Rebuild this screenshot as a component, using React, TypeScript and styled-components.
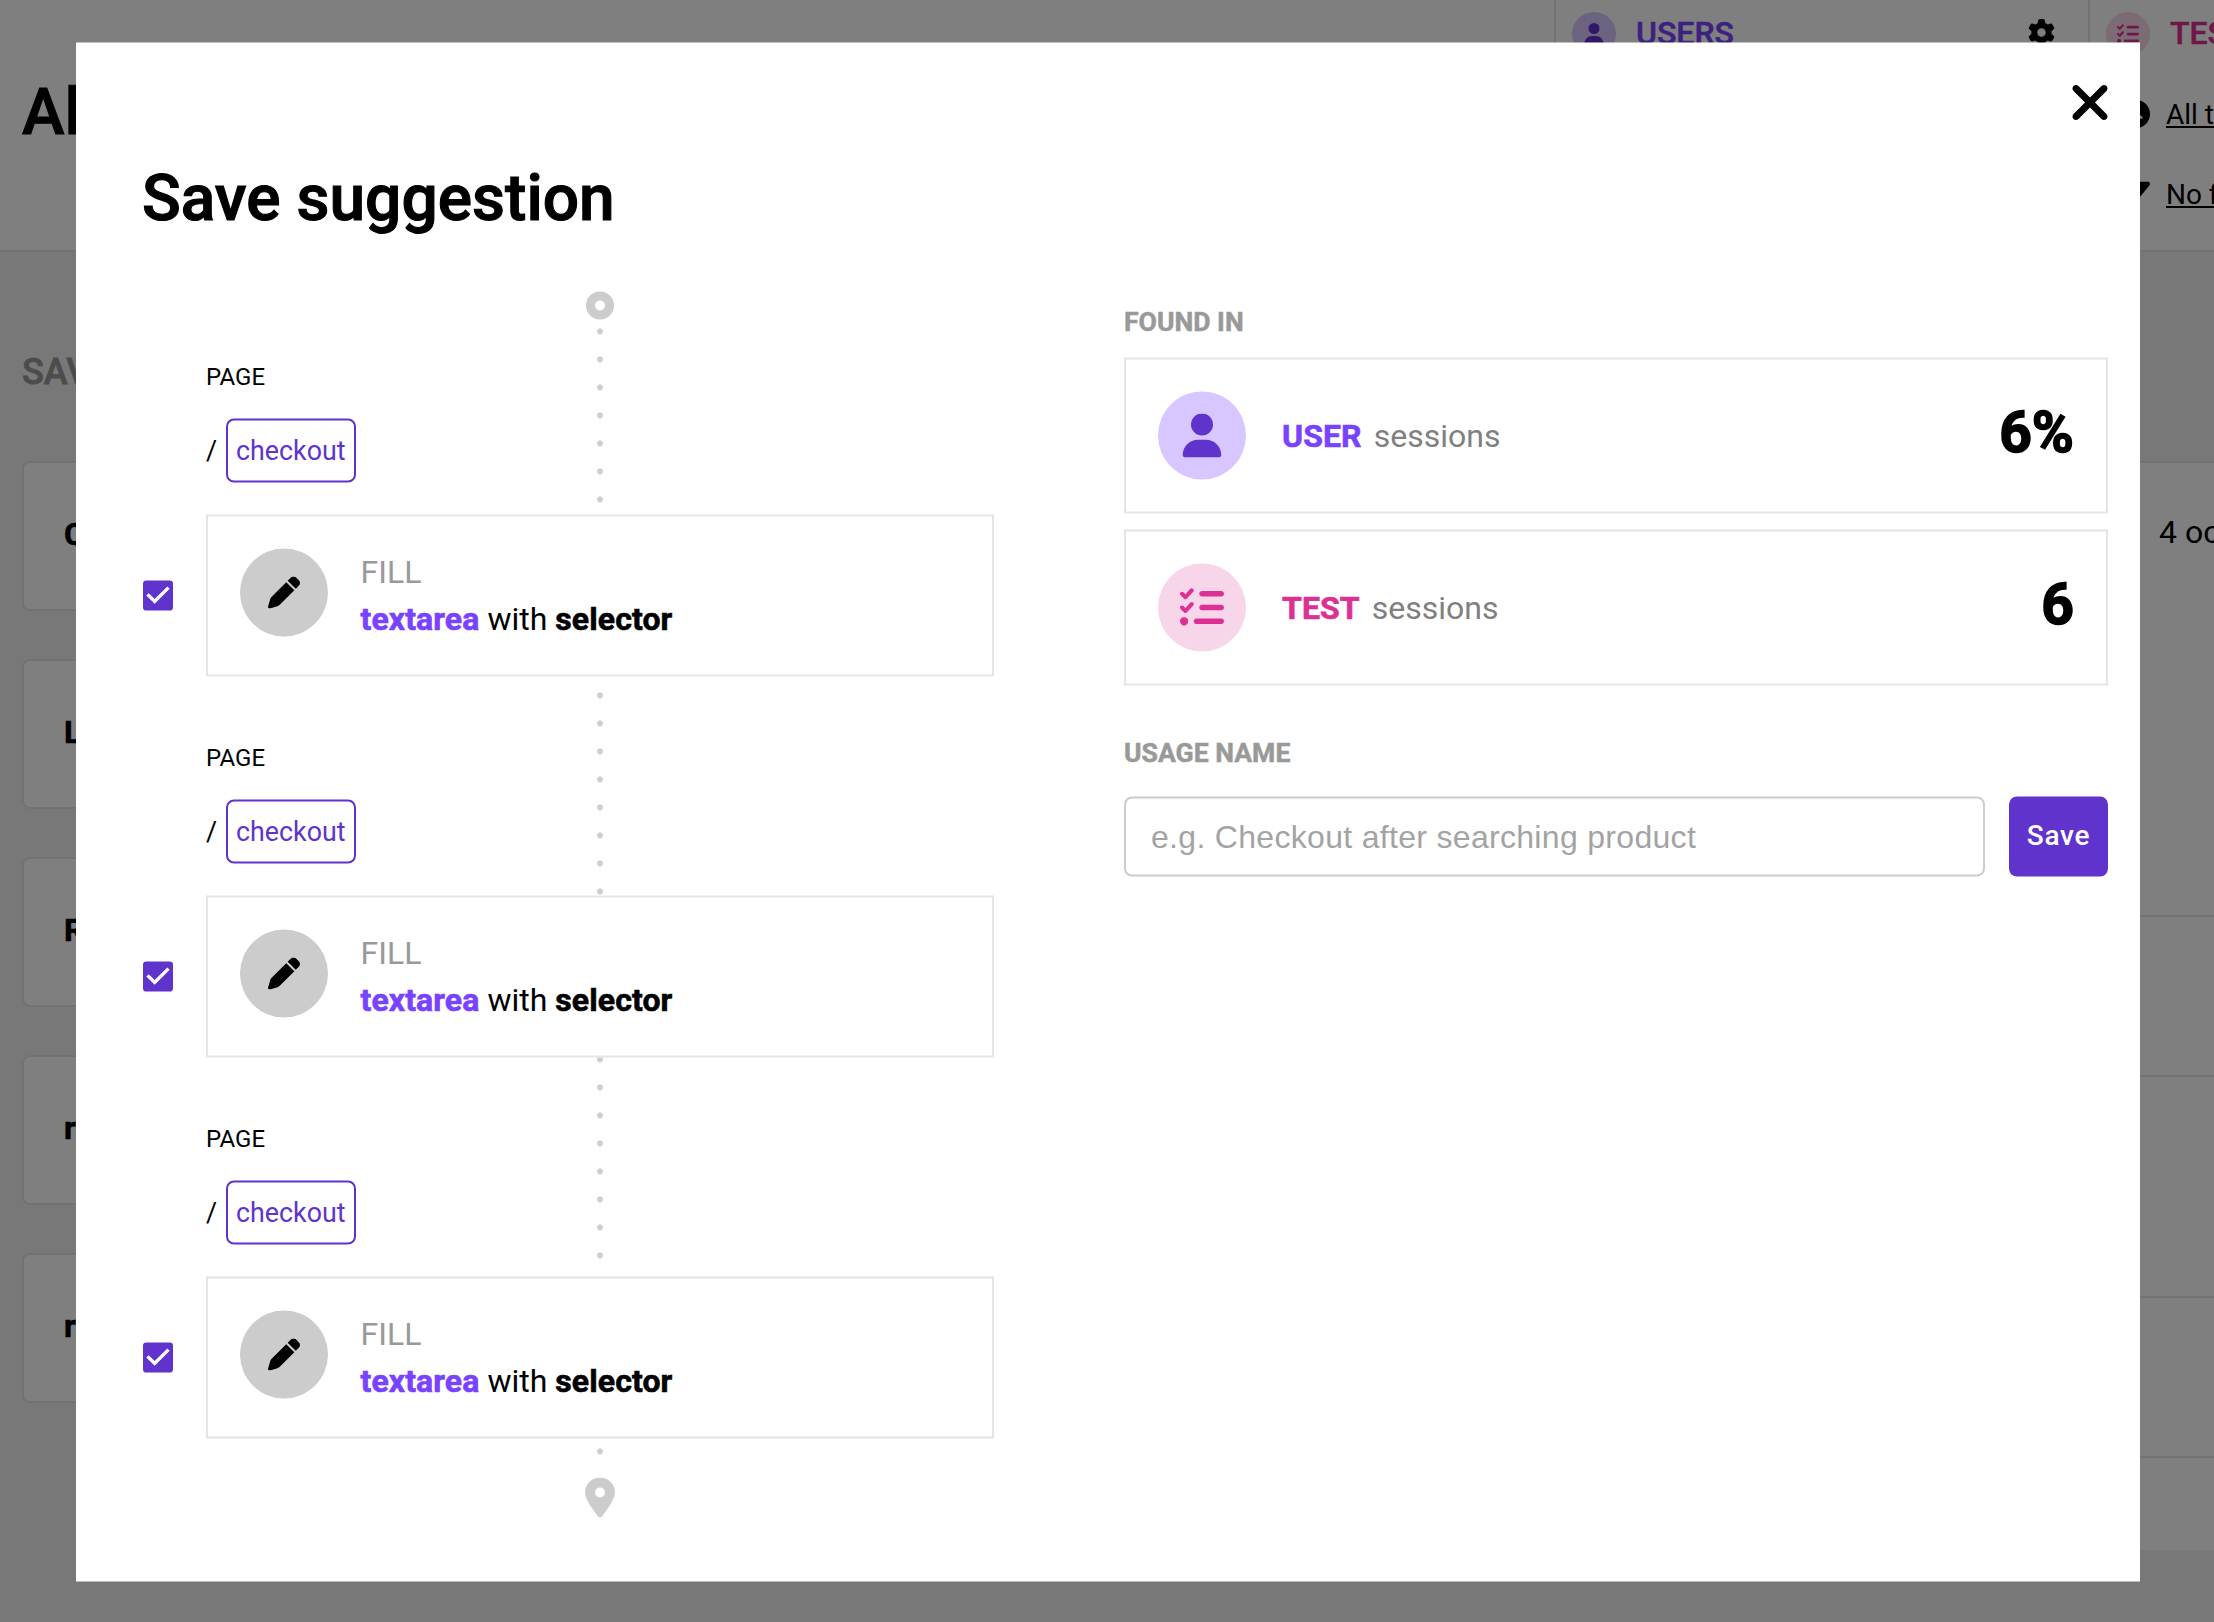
import React from "react";
import styled, { createGlobalStyle, css } from "styled-components";
import { FaClock, FaFilter, FaGear, FaListCheck, FaLocationDot, FaPen, FaUser, FaXmark } from "react-icons/fa6";
import { MdCheckBox } from "react-icons/md";

const GlobalStyle = createGlobalStyle`
  *, *::before, *::after { box-sizing: border-box; }
  html, body { margin: 0; height: 100%; overflow: hidden; }
  body { background: #f1f1f1; color: #000; font-family: Roboto, "Liberation Sans", sans-serif; font-size: 32px; }
  b { font-weight: 700; letter-spacing: 0.1px; -webkit-text-stroke: 0.6px currentColor; }
  svg { display: block; flex: none; }
`;

/* ---------- page behind the dialog ---------- */

const Page = styled.div`
  height: 1622px;
  overflow: hidden;
`;

const Header = styled.header`
  display: flex;
  height: 252px;
  background: #fff;
  border-bottom: 2px solid #e5e5e5;
  white-space: nowrap;
`;

const PageTitle = styled.h1`
  flex: 0 0 1554px;
  margin: 0;
  padding: 75px 0 0 22px;
  font-size: 64px;
  line-height: 75px;
  font-weight: 500;
  -webkit-text-stroke: 1px currentColor;
`;

const HeaderPanel = styled.section<{ $width: number }>`
  flex: 0 0 ${(p) => p.$width}px;
  padding: 12px 33px 0 16px;
  border-left: 2px solid #e5e5e5;
`;

const PanelTitle = styled.div<{ $color: string }>`
  display: flex;
  align-items: center;
  gap: 20px;
  height: 44px;
  margin-bottom: 18px;
  color: ${(p) => p.$color};
  font-weight: 500;
`;

const PanelName = styled.span`
  margin-top: -2px;
  -webkit-text-stroke: 0.5px currentColor;
`;

const PanelAction = styled.span`
  margin: -4px 0 0 auto;
  color: #000;
  font-size: 27px;
`;

const PanelLink = styled.div`
  display: flex;
  align-items: center;
  gap: 16px;
  height: 80px;
  padding-left: 16px;
  font-size: 28px;

  a {
    text-decoration: underline;
    text-decoration-thickness: 2px;
    text-underline-offset: 2px;
  }
`;

const Main = styled.main`
  padding: 99px 0 0 22px;
`;

const SectionTitle = styled.h2`
  margin: 0 0 68px;
  color: #999;
  font-size: 36px;
  line-height: 42px;
  font-weight: 500;
  -webkit-text-stroke: 0.8px currentColor;
`;

const Columns = styled.div`
  display: flex;
  align-items: flex-start;
  gap: 48px;
`;

const SavedList = styled.div`
  display: flex;
  flex-direction: column;
  gap: 48px;
  flex: 0 0 900px;
`;

const SavedCard = styled.div`
  display: flex;
  align-items: center;
  height: 150px;
  padding: 0 0 4px 40px;
  background: #fff;
  border: 2px solid #e5e5e5;
  border-radius: 8px;
`;

const Results = styled.div`
  flex: 0 0 1400px;
  border-top: 2px solid #e5e5e5;
  background: #fff;
`;

const ResultRow = styled.div<{ $height: number; $last?: boolean }>`
  height: ${(p) => p.$height}px;
  padding: 50px 0 0 1189px;
  line-height: 38px;
  white-space: nowrap;
  ${(p) => !p.$last && css`border-bottom: 2px solid #e5e5e5;`}
`;

/* ---------- dialog ---------- */

const Overlay = styled.div`
  position: fixed;
  inset: 0;
  padding: 42px 74px 0 76px;
  background: rgba(0, 0, 0, 0.5);
`;

const Dialog = styled.div`
  width: 2064px;
  height: 1539px;
  padding: 32px 32px 0 67px;
  background: #fff;
  transform: translateY(0.5px);
`;

const CloseRow = styled.div`
  display: flex;
  justify-content: flex-end;
  height: 56px;
  margin-right: -10px;
  font-size: 56px;
`;

const DialogTitle = styled.h2`
  margin: 30px 0 46px -1px;
  font-size: 64px;
  line-height: 75px;
  font-weight: 500;
  letter-spacing: 0.04px;
  -webkit-text-stroke: 1.1px currentColor;
`;

const DialogBody = styled.div`
  display: flex;
  gap: 130px;
`;

const Timeline = styled.div`
  display: flex;
  flex-direction: column;
  align-items: stretch;
  flex: 0 0 851px;
  padding-top: 10px;
`;

const StartMark = styled.div`
  align-self: flex-end;
  width: 28px;
  height: 28px;
  margin: 0 380px 0 0;
  border: 9px solid #ccc;
  border-radius: 50%;
`;

const Steps = styled.div`
  height: 1144px;
  background-image: radial-gradient(circle at center, #ccc 2.5px, rgba(204, 204, 204, 0) 3.5px);
  background-size: 28px 28px;
  background-position: 443px -2px;
  background-repeat: repeat-y;
`;

const Step = styled.div`
  height: 381px;
  padding-top: 41px;
`;

const StepPage = styled.div`
  padding-left: 63px;
`;

const StepLabel = styled.div`
  height: 58px;
  font-size: 24px;
  line-height: 32px;
`;

const PathRow = styled.div`
  display: flex;
  align-items: center;
  gap: 9px;
  height: 64px;
  font-size: 26.8px;
`;

const PathChip = styled.span`
  height: 64px;
  padding: 0 8px;
  border: 2px solid #6033cc;
  border-radius: 8px;
  color: #6033cc;
  line-height: 61px;
`;

const StepRow = styled.div`
  display: flex;
  align-items: center;
  gap: 28px;
  margin: 32px 0 0 -5px;

  > svg {
    color: #6033cc;
  }
`;

const ActionCard = styled.div`
  display: flex;
  gap: 32px;
  flex: 1;
  height: 162px;
  padding: 32px;
  background: #fff;
  border: 2px solid #e5e5e5;
  line-height: 47px;
`;

const Disc = styled.span<{ $bg: string; $color: string; $size?: number }>`
  display: flex;
  align-items: center;
  justify-content: center;
  flex: none;
  width: ${(p) => p.$size ?? 88}px;
  height: ${(p) => p.$size ?? 88}px;
  border-radius: 50%;
  background: ${(p) => p.$bg};
  color: ${(p) => p.$color};
`;

const Muted = styled.div`
  color: #999;
`;

const ActionText = styled.div`
  padding-left: 0.5px;
`;

const Accent = styled.b<{ $color: string }>`
  color: ${(p) => p.$color};
`;

const EndMark = styled.div`
  display: flex;
  justify-content: flex-end;
  margin: 14px 374px 0 0;
  color: #ccc;
`;

const Details = styled.div`
  flex: 1;
  padding-top: 24px;
`;

const FieldLabel = styled.div<{ $bottom: number }>`
  height: 32px;
  margin-bottom: ${(p) => p.$bottom}px;
  color: #999;
  font-size: 26.6px;
  line-height: 32px;
  font-weight: 700;
  -webkit-text-stroke: 0.5px currentColor;
`;

const FoundList = styled.div`
  display: flex;
  flex-direction: column;
  gap: 16px;
  margin-bottom: 51px;
`;

const FoundCard = styled.div`
  display: flex;
  align-items: center;
  height: 156px;
  padding: 0 32px;
  border: 2px solid #e5e5e5;
`;

const FoundText = styled.div`
  margin-left: 36px;
  color: #808080;

  b {
    margin-right: 12px;
  }
`;

const FoundValue = styled.div`
  margin: -8px 0 0 auto;
  font-size: 57px;
  font-weight: 700;
  -webkit-text-stroke: 1.5px currentColor;
`;

const SaveRow = styled.form`
  display: flex;
  gap: 24px;
`;

const NameInput = styled.input`
  flex: 1;
  height: 80px;
  padding: 0 25px;
  border: 2px solid #ccc;
  border-radius: 8px;
  font: 32px "Liberation Sans", Arial, sans-serif;
  letter-spacing: 0.31px;
  outline: none;

  &::placeholder {
    color: #a3a3a3;
    opacity: 1;
  }
`;

const SaveButton = styled.button`
  width: 99px;
  height: 80px;
  padding: 0 0 4px;
  border: 0;
  border-radius: 8px;
  background: #6033cc;
  color: #fff;
  font: 500 28px Roboto, sans-serif;
  letter-spacing: 0.7px;
`;

const savedNames = ["Checkout", "Login", "Register", "remove item", "return item"];
const resultHeights = [454, 160, 221, 160, 92];
const steps = [0, 1, 2];

export default function App() {
  return (
    <>
      <GlobalStyle />
      <Page>
        <Header>
          <PageTitle>All usages</PageTitle>
          <HeaderPanel $width={534}>
            <PanelTitle $color="#7842ff">
              <Disc $size={44} $bg="#d7c6ff" $color="#6033cc"><FaUser size={22} /></Disc>
              <PanelName>USERS</PanelName>
              <PanelAction><FaGear /></PanelAction>
            </PanelTitle>
          </HeaderPanel>
          <HeaderPanel $width={534}>
            <PanelTitle $color="#dc3094">
              <Disc $size={44} $bg="#f7d6e9" $color="#dc3094"><FaListCheck size={22} /></Disc>
              <PanelName>TESTS</PanelName>
            </PanelTitle>
            <PanelLink><FaClock size={28} /><a>All time</a></PanelLink>
            <PanelLink><FaFilter size={28} /><a>No filters</a></PanelLink>
          </HeaderPanel>
        </Header>
        <Main>
          <SectionTitle>SAVED USAGES</SectionTitle>
          <Columns>
            <SavedList>
              {savedNames.map((name) => <SavedCard key={name}><b>{name}</b></SavedCard>)}
            </SavedList>
            <Results>
              {resultHeights.map((height, i) => (
                <ResultRow key={i} $height={height} $last={i === resultHeights.length - 1}>
                  {i === 0 && "4 occurrences"}
                </ResultRow>
              ))}
            </Results>
          </Columns>
        </Main>
      </Page>

      <Overlay>
        <Dialog role="dialog">
          <CloseRow><FaXmark /></CloseRow>
          <DialogTitle>Save suggestion</DialogTitle>
          <DialogBody>
            <Timeline>
              <StartMark />
              <Steps>
                {steps.map((step) => (
                  <Step key={step}>
                    <StepPage>
                      <StepLabel>PAGE</StepLabel>
                      <PathRow>/<PathChip>checkout</PathChip></PathRow>
                    </StepPage>
                    <StepRow>
                      <MdCheckBox size={40} />
                      <ActionCard>
                        <Disc $bg="#ccc" $color="#000"><FaPen size={32} /></Disc>
                        <ActionText>
                          <Muted>FILL</Muted>
                          <div><Accent $color="#7842ff">textarea</Accent> with <b>selector</b></div>
                        </ActionText>
                      </ActionCard>
                    </StepRow>
                  </Step>
                ))}
              </Steps>
              <EndMark><FaLocationDot size={40} /></EndMark>
            </Timeline>
            <Details>
              <FieldLabel $bottom={20}>FOUND IN</FieldLabel>
              <FoundList>
                <FoundCard>
                  <Disc $bg="#d7c6ff" $color="#6033cc"><FaUser size={44} /></Disc>
                  <FoundText><Accent $color="#7842ff">USER</Accent>sessions</FoundText>
                  <FoundValue>6%</FoundValue>
                </FoundCard>
                <FoundCard>
                  <Disc $bg="#f7d6e9" $color="#dc3094"><FaListCheck size={44} /></Disc>
                  <FoundText><Accent $color="#dc3094">TEST</Accent>sessions</FoundText>
                  <FoundValue>6</FoundValue>
                </FoundCard>
              </FoundList>
              <FieldLabel $bottom={28}>USAGE NAME</FieldLabel>
              <SaveRow>
                <NameInput placeholder="e.g. Checkout after searching product" />
                <SaveButton type="button">Save</SaveButton>
              </SaveRow>
            </Details>
          </DialogBody>
        </Dialog>
      </Overlay>
    </>
  );
}
